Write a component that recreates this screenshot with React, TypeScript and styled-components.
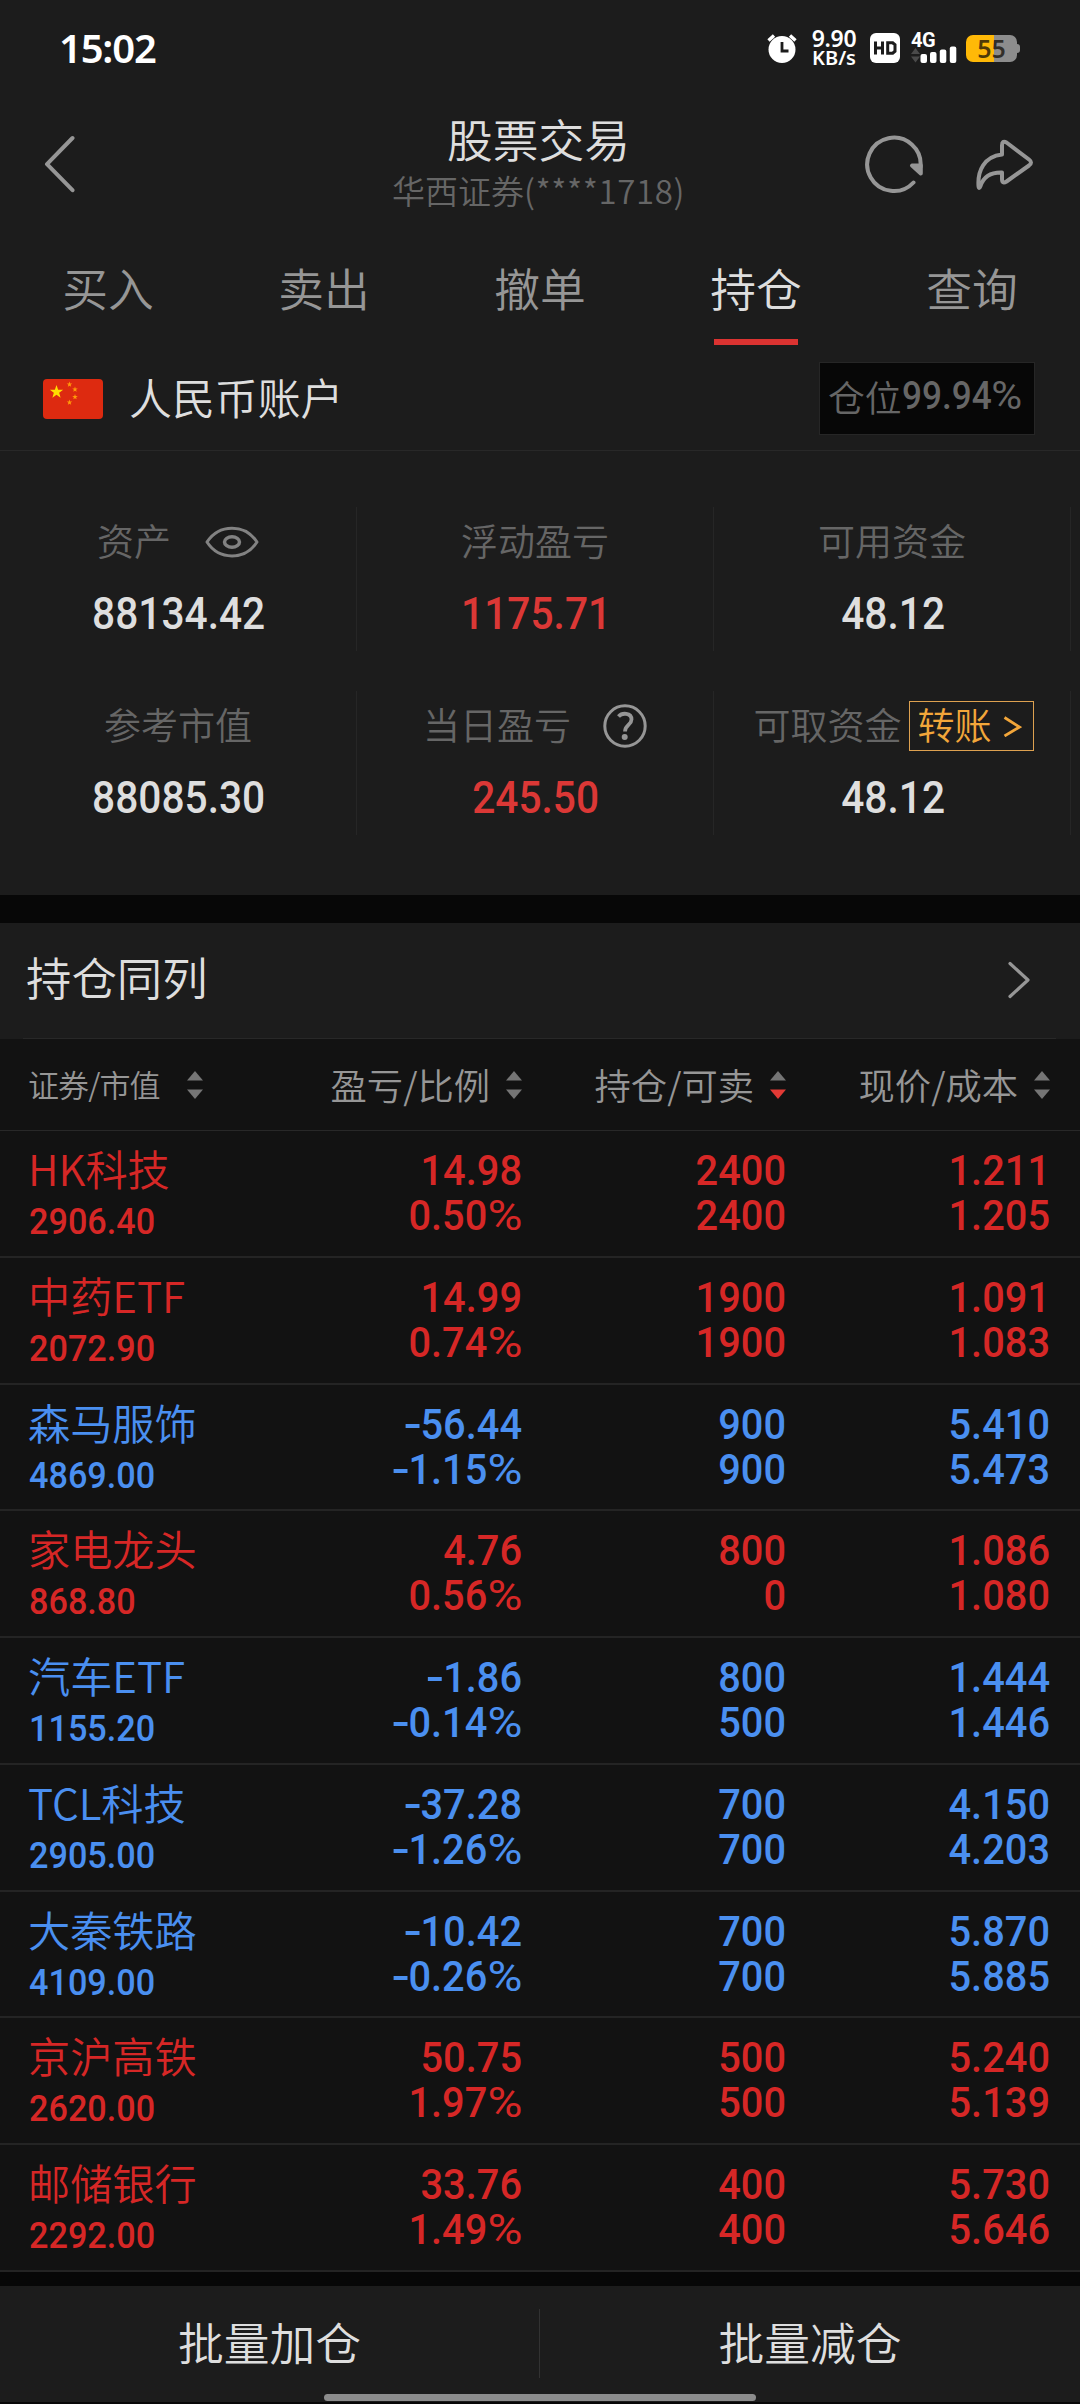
import React from 'react';
import styled, { createGlobalStyle, css } from 'styled-components';

const RED = '#d62726';
const BLUE = '#4a8ff0';
const CJK = '"Noto Sans CJK SC", sans-serif';

const GlobalStyle = createGlobalStyle`
  * { box-sizing: border-box; }
  body { margin: 0; background: #070707; }
`;

const Screen = styled.div`
  width: 1080px;
  height: 2404px;
  display: flex;
  flex-direction: column;
  overflow: hidden;
  background: #070707;
  color: #dedede;
  font-family: ${CJK};
  font-weight: 350;
  white-space: nowrap;
`;

const StatusBar = styled.header`
  height: 96px;
  flex: none;
  display: flex;
  align-items: center;
  padding: 0 60px 0 59px;
  background: #1c1c1c;
  color: #fff;
`;

const Clock = styled.div`
  flex: 1;
  padding-bottom: 1px;
  font: 600 40px/40px "Noto Sans", sans-serif;
  letter-spacing: -1.2px;
`;

const StatusIcons = styled.div`
  display: flex;
  align-items: center;
`;

const NetSpeed = styled.div`
  width: 46px;
  margin: 0 13px 0 14px;
  display: flex;
  flex-direction: column;
  align-items: center;
  font: 600 20px/20px "Noto Sans", sans-serif;
`;

const SpeedNumber = styled.span`
  font-size: 23px;
  letter-spacing: -0.3px;
`;

const Signal = styled.div`
  width: 46px;
  height: 30px;
  margin: 0 9px 0 11px;
  display: flex;
  flex-direction: column;
  justify-content: space-between;
  font: 700 20px/15px Roboto, sans-serif;
  letter-spacing: -0.5px;
`;

const SignalLabel = styled.span`
  height: 15px;
`;

const SignalGlyph = styled.svg`
  display: block;
  margin-top: -2px;
  flex: none;
`;

const Battery = styled.div`
  display: flex;
  align-items: center;
`;

const BatteryBody = styled.div`
  width: 51px;
  height: 27px;
  border-radius: 7px;
  background: linear-gradient(90deg, #ffb907 0 28px, #8d8d8d 28px);
  color: rgba(20, 16, 8, 0.75);
  font: 600 25px/27px "Noto Sans", sans-serif;
  text-align: center;
`;

const BatteryTip = styled.div`
  width: 3px;
  height: 9px;
  border-radius: 0 3px 3px 0;
  background: #8d8d8d;
`;

const TitleBar = styled.div`
  height: 136px;
  flex: none;
  display: grid;
  grid-template-columns: 1fr 400px 1fr;
  align-items: center;
  padding: 0 46px 0 43px;
  background: #1c1c1c;
`;

const TitleBlock = styled.div`
  display: flex;
  flex-direction: column;
  align-items: center;
  padding-bottom: 4px;
`;

const Title = styled.h1`
  margin: 0;
  font-size: 45.8px;
  line-height: 57px;
  font-weight: inherit;
`;

const Subtitle = styled.div`
  font-size: 33px;
  line-height: 47px;
  color: #666;
`;

const AccountNumber = styled.span`
  letter-spacing: 0.6px;
`;

const TitleActions = styled.div`
  display: flex;
  justify-content: flex-end;
  gap: 50px;
`;

const Tabs = styled.nav`
  height: 113px;
  flex: none;
  display: grid;
  grid-template-columns: repeat(5, 1fr);
  background: #1c1c1c;
`;

const Tab = styled.div<{ $active?: boolean }>`
  display: flex;
  flex-direction: column;
  align-items: center;
  padding-top: 25px;
  font-size: 45.8px;
  line-height: 60px;
  color: ${(p) => (p.$active ? '#dedede' : '#969696')};

  ${(p) =>
    p.$active &&
    css`
      &::after {
        content: '';
        width: 84px;
        height: 6px;
        margin-top: 22px;
        background: #db3331;
      }
    `}
`;

const AccountRow = styled.div`
  height: 106px;
  flex: none;
  display: flex;
  align-items: center;
  padding: 2px 45px 0 43px;
  border-bottom: 1px solid #282828;
  background: #1c1c1c;
  font-size: 42.9px;
`;

const AccountName = styled.div`
  flex: 1;
  margin-left: 26px;
  line-height: 60px;
  padding-bottom: 5px;
`;

const PositionBadge = styled.div`
  width: 216px;
  height: 73px;
  margin-bottom: 1px;
  display: flex;
  align-items: center;
  padding: 0 0 4px 8px;
  border: 1px solid #262626;
  background: #070707;
  color: #666;
  font-size: 36.8px;
`;

/* Narrow DIN-like figures: Roboto condensed towards the edge the text is set on. */
const FigureText = styled.span<{ $size: number; $from?: string }>`
  display: block;
  font-family: Roboto, sans-serif;
  font-weight: 500;
  font-size: ${(p) => p.$size}px;
  transform: scaleX(0.925);
  transform-origin: ${(p) => p.$from ?? 'left'} center;
`;

const Minus = styled.span`
  display: inline-block;
  margin-right: 4px;
  transform: scaleX(1.35);
  transform-origin: left center;
`;

const Percent = styled.span`
  display: inline-block;
  margin-left: 0.14em;
  font-weight: 400;
  transform: scaleX(1.2);
  transform-origin: right center;
`;

const BadgeLabel = styled.span`
  padding-bottom: 1px;
`;

const Summary = styled.section`
  height: 444px;
  flex: none;
  display: grid;
  grid-template-columns: 357px 357px 357px;
  grid-template-rows: 144px 144px;
  row-gap: 40px;
  align-content: start;
  padding-top: 56px;
  background: #1c1c1c;
`;

const SummaryCell = styled.div`
  display: flex;
  flex-direction: column;
  align-items: center;
  border-right: 1px solid #262626;
`;

const SummaryLabel = styled.div<{ $gap: number }>`
  height: 70px;
  display: flex;
  align-items: center;
  gap: ${(p) => p.$gap}px;
  color: #666;
  font-size: 37px;
  line-height: 50px;
`;

const LabelText = styled.span`
  padding-bottom: 3px;
`;

const SummaryValue = styled.div<{ $color?: string }>`
  line-height: 74px;
  padding: 1px 0 0 2px;
  color: ${(p) => p.$color ?? '#dedede'};
`;

const TransferButton = styled.div`
  width: 125px;
  height: 50px;
  margin-right: -3px;
  display: flex;
  align-items: center;
  justify-content: space-between;
  padding: 0 11px 0 8px;
  border: 1.5px solid #dda150;
  color: #f2a63a;
`;

const SectionHeader = styled.div`
  height: 116px;
  flex: none;
  margin-top: 28px;
  padding: 0 24px 0 23px;
  background: #1c1c1c;
`;

const SectionInner = styled.div`
  height: 116px;
  display: flex;
  align-items: center;
  justify-content: space-between;
  padding: 0 25px 1px 3px;
  border-bottom: 1px solid #282828;
  font-size: 45.4px;
`;

const SectionTitle = styled.span`
  padding-bottom: 8px;
`;

const Table = styled.section`
  flex: none;
  background: #121212;
`;

const columns = css`
  display: grid;
  grid-template-columns: 276px 246px 264px 264px;
  padding-right: 30px;
`;

const HeadRow = styled.div`
  ${columns}
  height: 92px;
  align-items: center;
  border-bottom: 1px solid #282828;
  color: #969696;
`;

const HeadCell = styled.div<{ $first?: boolean }>`
  display: flex;
  align-items: center;
  justify-content: ${(p) => (p.$first ? 'flex-start' : 'flex-end')};
  gap: ${(p) => (p.$first ? 27 : 16)}px;
  padding-left: ${(p) => (p.$first ? 28 : 0)}px;
  font-size: ${(p) => (p.$first ? 31 : 36.3)}px;
  letter-spacing: ${(p) => (p.$first ? -0.9 : 0)}px;
`;

const HeadText = styled.span`
  padding-bottom: 2px;
`;

const Row = styled.div<{ $up: boolean }>`
  ${columns}
  height: 126.78px;
  border-bottom: 2px solid #242424;
  color: ${(p) => (p.$up ? RED : BLUE)};
`;

const NameCell = styled.div`
  padding: 8px 0 0 28px;
  font-size: 42.2px;
  line-height: 58px;
`;

const MarketValue = styled.div`
  padding-left: 1px;
  line-height: 50px;
`;

const NumberCell = styled.div`
  padding-top: 17px;
  line-height: 45px;
  text-align: right;
`;

const BottomBar = styled.footer`
  position: relative;
  height: 116px;
  flex: none;
  margin-top: 14px;
  display: grid;
  grid-template-columns: 539px 1px 1fr;
  align-items: center;
  background: #1c1c1c;
`;

const BottomAction = styled.div`
  padding-bottom: 6px;
  text-align: center;
  font-size: 45.8px;
`;

const BottomDivider = styled.div`
  height: 69px;
  background: #323232;
`;

const HomeIndicator = styled.div`
  position: absolute;
  left: 324px;
  bottom: 1px;
  width: 432px;
  height: 7px;
  border-radius: 4px;
  background: #8c8c8c;
`;

const AlarmIcon = () => (
  <svg width="30" height="30" viewBox="0 0 30 30">
    <circle cx="15" cy="16.5" r="13.5" fill="#fff" />
    <path d="M1.5 7.5 7 2.5M28.5 7.5 23 2.5" stroke="#fff" strokeWidth="3.4" />
    <path d="M15 9v9h6.500" fill="none" stroke="#1c1c1c" strokeWidth="2.800" />
  </svg>
);

const HdIcon = () => (
  <svg width="30" height="30" viewBox="0 0 30 30">
    <rect width="30" height="30" rx="6" fill="#fff" />
    <path
      d="M5.500 8.500v13M12.500 8.500v13M5.500 15h7M17.700 9.800h5l2.300 2v6.400l-2.300 2h-5z"
      fill="none"
      stroke="#1c1c1c"
      strokeWidth="3"
    />
  </svg>
);

const BackIcon = () => (
  <svg width="32" height="60" viewBox="0 0 32 60">
    <path d="M29.500 4 4 30.200l25.500 26" fill="none" stroke="#969696" strokeWidth="4" strokeLinecap="round" strokeLinejoin="round" />
  </svg>
);

const RefreshIcon = () => (
  <svg width="60" height="60" viewBox="0 0 60 60">
    <path d="M49.500 48.500A26.700 26.700 0 1 1 56.500 33" fill="none" stroke="#969696" strokeWidth="4" strokeLinecap="round" />
    <path d="M48 31.500h8.800v8z" fill="#969696" stroke="#969696" strokeWidth="4" strokeLinejoin="round" />
  </svg>
);

const ShareIcon = () => (
  <svg width="60" height="60" viewBox="0 0 60 60">
    <path
      d="M28 20.500V11.500Q28 6 32.500 8.500L55 25.500Q59 28.500 55 31.500L32.500 47.500Q28 50.500 28 45V38.500Q11 38 6.500 52Q5 56 4.500 52C3.500 37 10 22.500 28 20.500Z"
      fill="none"
      stroke="#969696"
      strokeWidth="4"
      strokeLinejoin="round"
    />
  </svg>
);

const starPoints = (cx: number, cy: number, r: number) =>
  Array.from({ length: 10 }, (_, i) => {
    const a = -Math.PI / 2 + (i * Math.PI) / 5;
    const d = i % 2 ? r * 0.4 : r;
    return `${cx + d * Math.cos(a)},${cy + d * Math.sin(a)}`;
  }).join(' ');

const FlagIcon = () => (
  <svg width="60" height="40" viewBox="0 0 60 40">
    <rect width="60" height="40" rx="4" fill="#dd2a10" />
    <polygon points={starPoints(13.5, 13, 7)} fill="#ffde00" />
    {[[26.5, 5.5], [32, 10.5], [32, 18], [26.5, 23.5]].map(([x, y]) => (
      <polygon key={`${x}-${y}`} points={starPoints(x, y, 2.9)} fill="#ff9a0a" />
    ))}
  </svg>
);

const EyeIcon = () => (
  <svg width="54" height="32" viewBox="0 0 54 32">
    <path d="M2 16C14-2.500 40-2.500 52 16 40 34.500 14 34.500 2 16Z" fill="none" stroke="#828282" strokeWidth="3" strokeLinejoin="round" />
    <ellipse cx="27" cy="16" rx="7.500" ry="5.200" fill="none" stroke="#828282" strokeWidth="3.500" />
  </svg>
);

const HelpIcon = () => (
  <svg width="44" height="44" viewBox="0 0 44 44">
    <circle cx="22" cy="22" r="20.200" fill="none" stroke="#969696" strokeWidth="3" />
    <path d="M15.500 12.500C19 8.500 28.500 8.500 28.500 15.500c0 5.500-6.500 5.500-6.500 12" fill="none" stroke="#969696" strokeWidth="3.800" />
    <circle cx="21.700" cy="33" r="3" fill="#969696" />
  </svg>
);

const ArrowText = () => (
  <svg width="19" height="22" viewBox="0 0 19 22">
    <path d="M1.500 2.500 16.500 12l-15 9" fill="none" stroke="#f2a63a" strokeWidth="2.800" />
  </svg>
);

const ChevronIcon = () => (
  <svg width="24" height="38" viewBox="0 0 24 38">
    <path d="M3 2.500 21 19 3 35.500" fill="none" stroke="#969696" strokeWidth="3.200" strokeLinecap="round" strokeLinejoin="round" />
  </svg>
);

const SortIcon = ({ active }: { active?: boolean }) => (
  <svg width="16" height="28" viewBox="0 0 16 28">
    <path d="M8 0l8 9.500H0z" fill="#757575" />
    <path d="M8 28l8-9.500H0z" fill={active ? '#e23a35' : '#757575'} />
  </svg>
);

type FigureProps = { size: number; from?: string; value: string };

const Figure = ({ size, from, value }: FigureProps) => {
  const digits = value.replace(/[-%]/g, '');
  return (
    <FigureText $size={size} $from={from}>
      {value.startsWith('-') && <Minus>-</Minus>}
      {digits}
      {value.endsWith('%') && <Percent>%</Percent>}
    </FigureText>
  );
};

type Stat = { label: string; value: string; color?: string; extra?: React.ReactNode; gap?: number };

const stats: Stat[] = [
  { label: '资产', value: '88134.42', extra: <EyeIcon />, gap: 34 },
  { label: '浮动盈亏', value: '1175.71', color: '#db3836' },
  { label: '可用资金', value: '48.12' },
  { label: '参考市值', value: '88085.30' },
  { label: '当日盈亏', value: '245.50', color: '#db3836', extra: <HelpIcon />, gap: 32 },
  {
    label: '可取资金',
    value: '48.12',
    extra: (
      <TransferButton>
        <LabelText>转账</LabelText>
        <ArrowText />
      </TransferButton>
    ),
    gap: 7,
  },
];

const holdings: string[][] = [
  ['HK科技', '2906.40', '14.98', '0.50%', '2400', '2400', '1.211', '1.205'],
  ['中药ETF', '2072.90', '14.99', '0.74%', '1900', '1900', '1.091', '1.083'],
  ['森马服饰', '4869.00', '-56.44', '-1.15%', '900', '900', '5.410', '5.473'],
  ['家电龙头', '868.80', '4.76', '0.56%', '800', '0', '1.086', '1.080'],
  ['汽车ETF', '1155.20', '-1.86', '-0.14%', '800', '500', '1.444', '1.446'],
  ['TCL科技', '2905.00', '-37.28', '-1.26%', '700', '700', '4.150', '4.203'],
  ['大秦铁路', '4109.00', '-10.42', '-0.26%', '700', '700', '5.870', '5.885'],
  ['京沪高铁', '2620.00', '50.75', '1.97%', '500', '500', '5.240', '5.139'],
  ['邮储银行', '2292.00', '33.76', '1.49%', '400', '400', '5.730', '5.646'],
];

const NumberPair = ({ top, bottom }: { top: string; bottom: string }) => (
  <NumberCell>
    <Figure size={43} from="right" value={top} />
    <Figure size={43} from="right" value={bottom} />
  </NumberCell>
);

export default function App() {
  return (
    <Screen>
      <GlobalStyle />
      <StatusBar>
        <Clock>15:02</Clock>
        <StatusIcons>
          <AlarmIcon />
          <NetSpeed>
            <SpeedNumber>9.90</SpeedNumber>
            <span>KB/s</span>
          </NetSpeed>
          <HdIcon />
          <Signal>
            <SignalLabel>4G</SignalLabel>
            <SignalGlyph width="46" height="17" viewBox="0 0 46 17">
              <path d="M0 8 4.500 2 9 8zM0 10.500l4.500 6 4.500-6z" fill="#4a4a4a" />
              <rect x="9.500" y="8" width="6.500" height="9" rx="2" fill="#fff" />
              <rect x="19" y="6" width="6.500" height="11" rx="2" fill="#fff" />
              <rect x="28.800" y="3.500" width="6.500" height="13.500" rx="2" fill="#fff" />
              <rect x="38.800" y="0.500" width="6.500" height="16.500" rx="2" fill="#fff" />
            </SignalGlyph>
          </Signal>
          <Battery>
            <BatteryBody>55</BatteryBody>
            <BatteryTip />
          </Battery>
        </StatusIcons>
      </StatusBar>

      <TitleBar>
        <BackIcon />
        <TitleBlock>
          <Title>股票交易</Title>
          <Subtitle>
            华西证券<AccountNumber>(****1718)</AccountNumber>
          </Subtitle>
        </TitleBlock>
        <TitleActions>
          <RefreshIcon />
          <ShareIcon />
        </TitleActions>
      </TitleBar>

      <Tabs>
        {['买入', '卖出', '撤单', '持仓', '查询'].map((t) => (
          <Tab key={t} $active={t === '持仓'}>{t}</Tab>
        ))}
      </Tabs>

      <AccountRow>
        <FlagIcon />
        <AccountName>人民币账户</AccountName>
        <PositionBadge>
          <BadgeLabel>仓位</BadgeLabel>
          <Figure size={38} value="99.94%" />
        </PositionBadge>
      </AccountRow>

      <Summary>
        {stats.map((s) => (
          <SummaryCell key={s.label}>
            <SummaryLabel $gap={s.gap ?? 0}>
              <LabelText>{s.label}</LabelText>
              {s.extra}
            </SummaryLabel>
            <SummaryValue $color={s.color}>
              <Figure size={44} from="center" value={s.value} />
            </SummaryValue>
          </SummaryCell>
        ))}
      </Summary>

      <SectionHeader>
        <SectionInner>
          <SectionTitle>持仓同列</SectionTitle>
          <ChevronIcon />
        </SectionInner>
      </SectionHeader>

      <Table>
        <HeadRow>
          {['证券/市值', '盈亏/比例', '持仓/可卖', '现价/成本'].map((h, i) => (
            <HeadCell key={h} $first={i === 0}>
              <HeadText>{h}</HeadText>
              <SortIcon active={i === 2} />
            </HeadCell>
          ))}
        </HeadRow>
        {holdings.map(([name, value, pnl, ratio, held, sellable, price, cost]) => (
          <Row key={name} $up={!pnl.startsWith('-')}>
            <NameCell>
              {name}
              <MarketValue>
                <Figure size={37} value={value} />
              </MarketValue>
            </NameCell>
            <NumberPair top={pnl} bottom={ratio} />
            <NumberPair top={held} bottom={sellable} />
            <NumberPair top={price} bottom={cost} />
          </Row>
        ))}
      </Table>

      <BottomBar>
        <BottomAction>批量加仓</BottomAction>
        <BottomDivider />
        <BottomAction>批量减仓</BottomAction>
        <HomeIndicator />
      </BottomBar>
    </Screen>
  );
}
